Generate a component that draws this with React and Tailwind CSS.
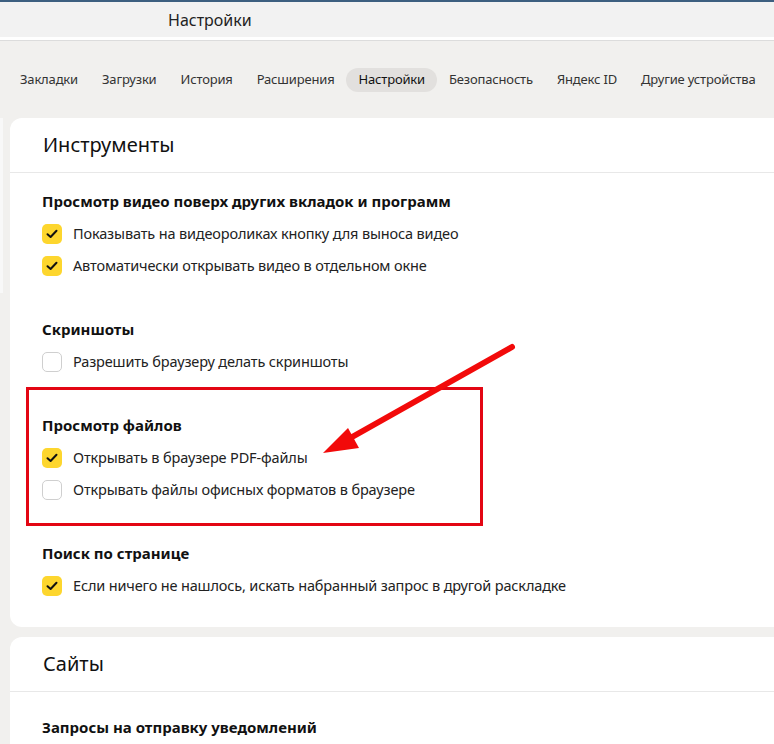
import React from "react";

const tabs = ["Закладки", "Загрузки", "История", "Расширения", "Настройки", "Безопасность", "Яндекс ID", "Другие устройства"];

const sections = [
    {
        title: "Просмотр видео поверх других вкладок и программ",
        items: [
            { label: "Показывать на видеороликах кнопку для выноса видео", checked: true },
            { label: "Автоматически открывать видео в отдельном окне", checked: true },
        ],
    },
    {
        title: "Скриншоты",
        items: [{ label: "Разрешить браузеру делать скриншоты", checked: false }],
    },
    {
        title: "Просмотр файлов",
        items: [
            { label: "Открывать в браузере PDF-файлы", checked: true },
            { label: "Открывать файлы офисных форматов в браузере", checked: false },
        ],
    },
    {
        title: "Поиск по странице",
        items: [{ label: "Если ничего не нашлось, искать набранный запрос в другой раскладке", checked: true }],
    },
];

function Checkbox({ checked }) {
    if (!checked) {
        return <span className="w-5 h-5 shrink-0 rounded-[5px] border border-[#cfcfcf] bg-white" />;
    }
    return (
        <span className="w-5 h-5 shrink-0 rounded-[5px] bg-[#fdd62e] flex items-center justify-center">
            <svg width="12" height="10" viewBox="0 0 12 10" fill="none">
                <path d="M1.5 5.2 L4.6 8 L10.5 1.8" stroke="#111" strokeWidth="2" strokeLinecap="round" strokeLinejoin="round" />
            </svg>
        </span>
    );
}

function Section({ title, items }) {
    return (
        <div>
            <div className="h-6 flex items-center text-[15px] font-bold text-[#111] whitespace-nowrap">{title}</div>
            <div className="mt-[5px]">
                {items.map((it) => (
                    <div key={it.label} className="h-8 flex items-center gap-[11px]">
                        <Checkbox checked={it.checked} />
                        <span className="text-[14.5px] tracking-[-0.15px] text-[#222] whitespace-nowrap">{it.label}</span>
                    </div>
                ))}
            </div>
        </div>
    );
}

export default function App() {
    return (
        <div className="relative w-[774px] h-[744px] overflow-hidden bg-[#f1f0ee] font-['Noto_Sans',sans-serif] text-[#111]">
            <div className="h-[2px] bg-[#3d5f80]" />
            <div className="h-[35px] bg-[#f2f2f2] flex items-center pl-[168px] text-[16px] text-[#222]">Настройки</div>
            <div className="h-[3px] bg-white" />
            <div className="h-px bg-[#dcdcdc]" />

            <div className="h-[77px] flex items-center pl-[8px] text-[13px] tracking-[-0.17px] text-[#333] whitespace-nowrap">
                {tabs.map((t) => (
                    <div
                        key={t}
                        className={
                            t === "Настройки"
                                ? "px-3 h-6 flex items-center rounded-full bg-[#e2e0de] text-[#111]"
                                : "px-3 h-6 flex items-center"
                        }
                    >
                        {t}
                    </div>
                ))}
            </div>

            <div className="flex">
                <div className="w-[3px] h-[175px] bg-[#f8f8f8] shrink-0" />
                <div className="flex-1 pl-[7px] flex flex-col gap-[10px]">
                    <div className="bg-white rounded-l-xl pb-[25px]">
                        <div className="h-[55px] flex items-center px-[33px] text-[20px] text-[#111] border-b border-[#e8e8e8]">
                            Инструменты
                        </div>
                        <div className="px-[32px] pt-[16px] flex flex-col gap-[35px]">
                            {sections.map((s) => (
                                <Section key={s.title} title={s.title} items={s.items} />
                            ))}
                        </div>
                    </div>
                    <div className="bg-white rounded-l-xl h-[200px]">
                        <div className="h-[55px] flex items-center px-[33px] text-[20px] text-[#111] border-b border-[#e8e8e8]">
                            Сайты
                        </div>
                        <div className="px-[32px] pt-[23px]">
                            <div className="h-6 flex items-center text-[15px] font-bold">Запросы на отправку уведомлений</div>
                        </div>
                    </div>
                </div>
            </div>

            {/* annotation */}
            <div className="absolute left-[26px] top-[387px] w-[457px] h-[139px] border-[3px] border-[#e30613]" />
            <svg className="absolute left-0 top-0" width="774" height="744" viewBox="0 0 774 744">
                <line x1="512" y1="347" x2="345" y2="441" stroke="#f20a0a" strokeWidth="6" strokeLinecap="round" />
                <polygon points="323,453 348,428 359,448" fill="#f20a0a" />
            </svg>
        </div>
    );
}
